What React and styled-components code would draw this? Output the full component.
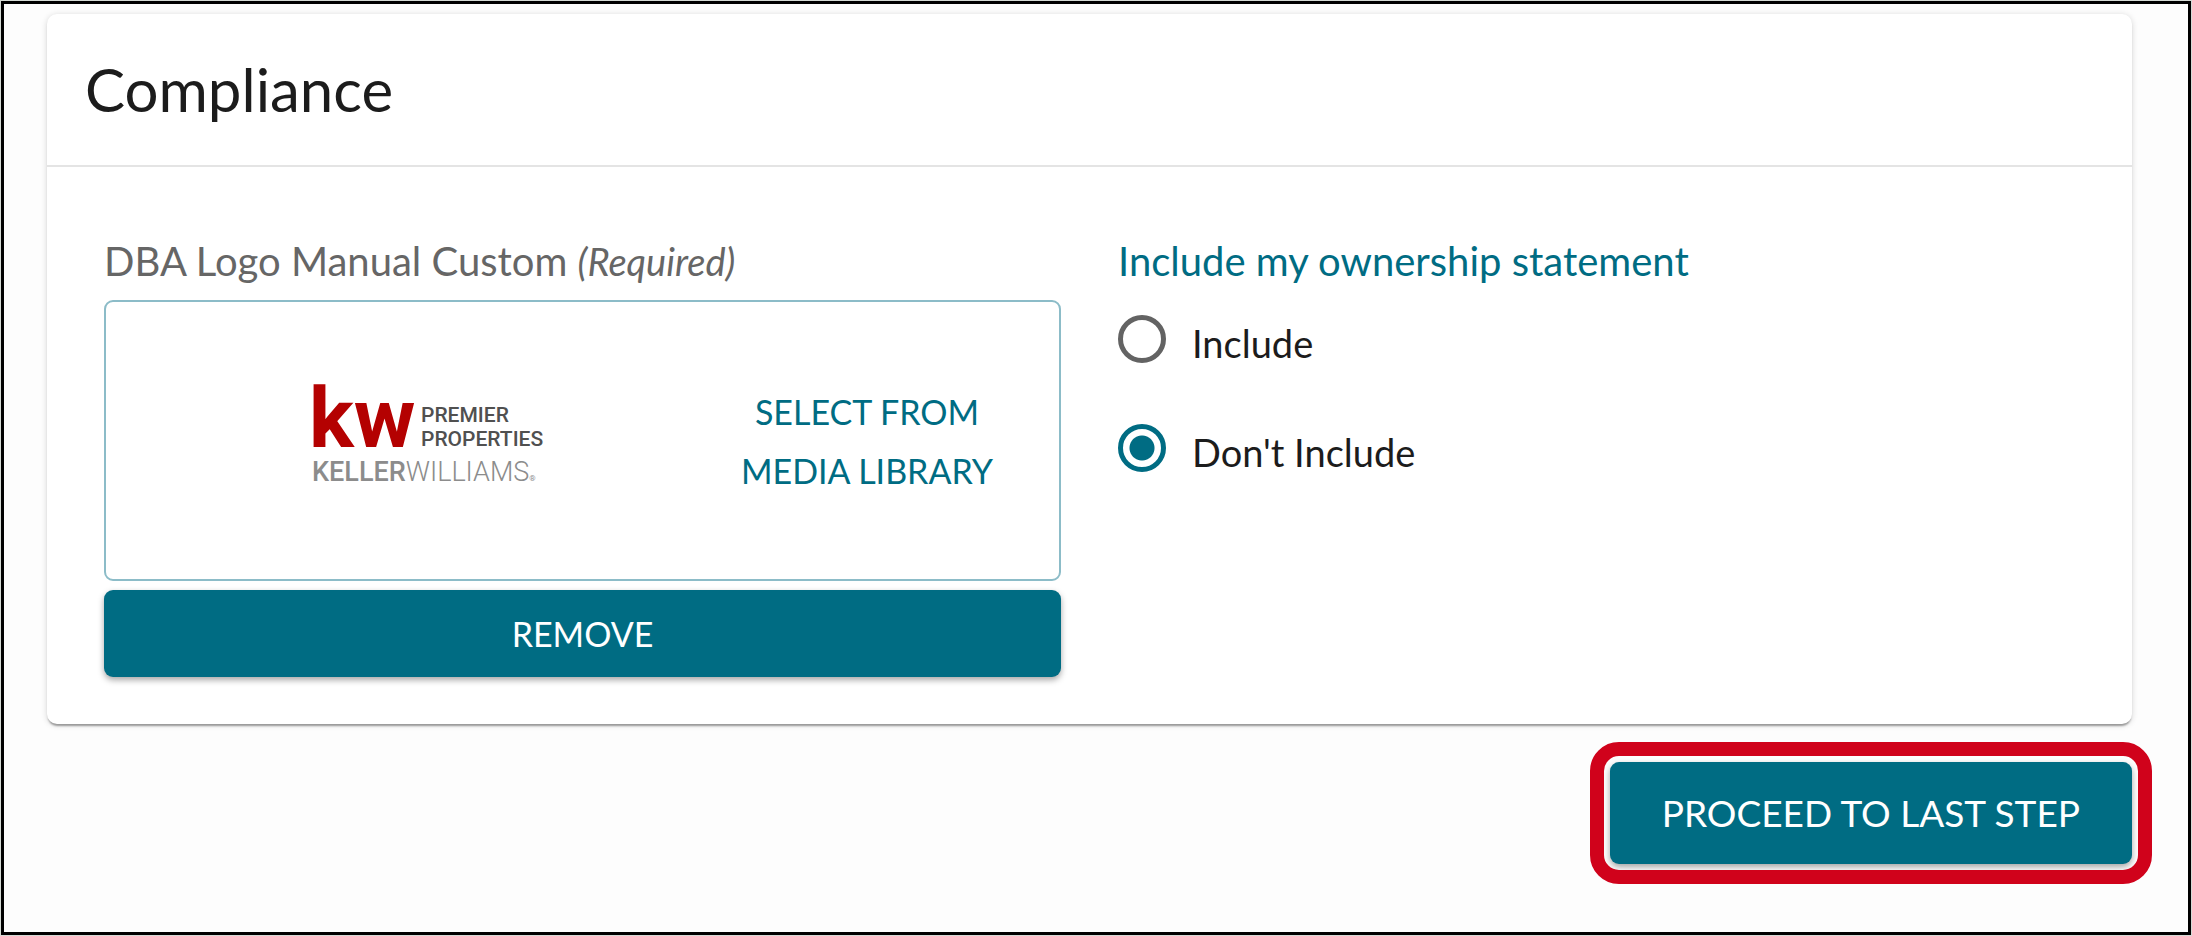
import React, { useState } from 'react';
import styled, { createGlobalStyle } from 'styled-components';

const palette = {
  teal: '#006c83',
  tealBorder: '#8cbcc8',
  red: '#d0021b',
  brand: '#b40101',
  text: '#1c1c1c',
  muted: '#666666',
  line: '#e4e4e4',
  page: '#fdfdfd',
};

const GlobalStyle = createGlobalStyle`
  * {
    box-sizing: border-box;
  }
  body {
    margin: 0;
    background: #d5dad5;
    color: ${palette.text};
    font-family: Lato, 'Open Sans', sans-serif;
  }
  button,
  input {
    font: inherit;
  }
`;

const Page = styled.div`
  display: flex;
  min-height: 100vh;
  padding: 1px;
`;

const Frame = styled.main`
  flex: 1;
  padding: 10px 56px 44px 43px;
  border: 3px solid #000;
  background: ${palette.page};
`;

const Card = styled.section`
  border-radius: 10px;
  background: #fff;
  box-shadow: 0 3px 2px -1px rgba(0, 0, 0, 0.34), 0 1px 6px rgba(0, 0, 0, 0.16);
`;

const CardHeader = styled.header`
  padding: 39px 38px 40px;
  border-bottom: 2px solid ${palette.line};
  h2 {
    margin: 0;
    font-size: 60px;
    font-weight: 400;
    line-height: 72px;
  }
`;

const CardBody = styled.div`
  display: grid;
  grid-template-columns: 1fr 1fr;
  gap: 57px;
  padding: 70px 57px 47px;
`;

const FieldLabel = styled.div`
  color: ${palette.muted};
  font-size: 40px;
  line-height: 48px;
  em {
    font-size: 38px;
  }
`;

const LogoBox = styled.div`
  display: flex;
  align-items: center;
  justify-content: space-between;
  height: 281px;
  margin: 15px 0 9px;
  padding: 0 62px 0 201px;
  border: 2px solid ${palette.tealBorder};
  border-radius: 9px;
`;

const SelectButton = styled.button`
  width: 260px;
  padding: 0;
  border: none;
  background: none;
  color: ${palette.teal};
  font-size: 34px;
  line-height: 59px;
  cursor: pointer;
`;

const SolidButton = styled.button`
  display: block;
  width: ${(props) => (props.$fullWidth ? '100%' : 'auto')};
  padding: ${(props) => (props.$large ? '27px 52px' : '20px 24px')};
  border: none;
  border-radius: 9px;
  background: ${palette.teal};
  box-shadow: 0 3px 6px rgba(0, 0, 0, 0.35);
  color: #fff;
  font-size: ${(props) => (props.$large ? '37px' : '34px')};
  line-height: ${(props) => (props.$large ? '48px' : '47px')};
  cursor: pointer;
`;

const Statement = styled.fieldset`
  min-width: 0;
  margin: 0;
  padding: 0;
  border: none;
  legend {
    padding: 0;
    color: ${palette.teal};
    font-size: 40px;
    line-height: 48px;
  }
`;

const RadioList = styled.div`
  display: flex;
  flex-direction: column;
  gap: 53px;
  padding-top: 26px;
`;

const RadioRow = styled.label`
  display: flex;
  align-items: flex-start;
  gap: 26px;
  height: 56px;
  font-size: 38px;
  line-height: 64px;
  cursor: pointer;
`;

const Radio = styled.input`
  appearance: none;
  flex: none;
  width: 48px;
  height: 48px;
  margin: 4px 0 0;
  border: 5px solid #636363;
  border-radius: 50%;
  &:checked {
    border-color: ${palette.teal};
    background: radial-gradient(circle, ${palette.teal} 12px, #fff 13px);
  }
`;

const Actions = styled.div`
  display: flex;
  justify-content: flex-end;
  padding-top: 38px;
`;

const Highlight = styled.div`
  border-radius: 9px;
  outline: 14px solid ${palette.red};
  outline-offset: 6px;
`;

const KwLogo = () => (
  <svg
    width="248"
    height="142"
    viewBox="-6 -10 248 142"
    overflow="visible"
    role="img"
  >
    <title>KW Premier Properties, Keller Williams</title>
    <text
      x="-4"
      y="67"
      fontFamily="Roboto, sans-serif"
      fontSize="84"
      fontWeight="700"
      fill={palette.brand}
    >
      kw
    </text>
    <g
      fontFamily="Roboto, sans-serif"
      fontSize="21"
      fontWeight="500"
      fill="#505050"
    >
      <text x="108" y="42">PREMIER</text>
      <text x="108" y="66">PROPERTIES</text>
    </g>
    <text
      y="101"
      fontFamily="Roboto, sans-serif"
      fontSize="27"
      fill="#8c8c8c"
    >
      <tspan x="-1" fontWeight="500">KELLER</tspan>
      <tspan fontWeight="300">WILLIAMS</tspan>
      <tspan fontSize="8">®</tspan>
    </text>
  </svg>
);

const App = () => {
  const [statement, setStatement] = useState('exclude');
  const onChange = (e) => setStatement(e.target.value);

  return (
    <>
      <GlobalStyle />
      <Page>
        <Frame>
          <Card>
            <CardHeader>
              <h2>Compliance</h2>
            </CardHeader>
            <CardBody>
              <div>
                <FieldLabel>
                  DBA Logo Manual Custom <em>(Required)</em>
                </FieldLabel>
                <LogoBox>
                  <KwLogo />
                  <SelectButton type="button">
                    SELECT FROM MEDIA LIBRARY
                  </SelectButton>
                </LogoBox>
                <SolidButton type="button" $fullWidth>
                  REMOVE
                </SolidButton>
              </div>
              <Statement>
                <legend>Include my ownership statement</legend>
                <RadioList>
                  <RadioRow>
                    <Radio
                      type="radio"
                      name="statement"
                      value="include"
                      checked={statement === 'include'}
                      onChange={onChange}
                    />
                    Include
                  </RadioRow>
                  <RadioRow>
                    <Radio
                      type="radio"
                      name="statement"
                      value="exclude"
                      checked={statement === 'exclude'}
                      onChange={onChange}
                    />
                    Don't Include
                  </RadioRow>
                </RadioList>
              </Statement>
            </CardBody>
          </Card>
          <Actions>
            <Highlight>
              <SolidButton type="button" $large>
                PROCEED TO LAST STEP
              </SolidButton>
            </Highlight>
          </Actions>
        </Frame>
      </Page>
    </>
  );
};

export default App;
